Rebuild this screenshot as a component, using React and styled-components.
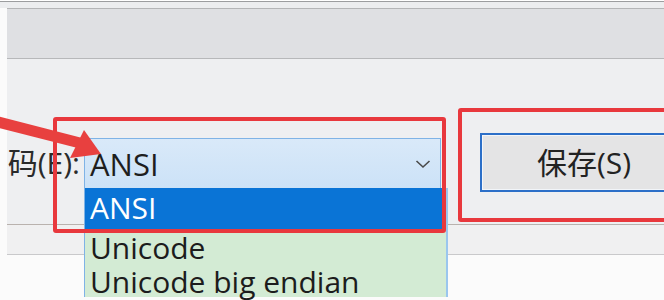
import React from 'react';
import styled, { createGlobalStyle } from 'styled-components';

const Global = createGlobalStyle`
  html, body { margin: 0; padding: 0; background: #fff; }
  body { overflow: hidden; }
`;

const Page = styled.div`
  position: relative;
  width: 664px;
  height: 300px;
  overflow: hidden;
  background: #fff;
  display: flex;
  flex-direction: column;
  font-family: "Open Sans", "Noto Sans CJK SC", sans-serif;
  color: #1e1e1e;
`;

const TopEdge = styled.div`
  flex: none;
  height: 6px;
  margin-top: 1px;
  border-top: 1px solid #9c9d9f;
  background: #ecedef;
`;

const Body = styled.div`
  flex: 1;
  display: flex;
  flex-direction: column;
  padding-left: 7px;
  background: #fbfbfb;
`;

const Band = styled.div`
  flex: none;
  height: 49px;
  background: #dfe0e3;
  border-top: 1px solid #b4b5b7;
  border-bottom: 1px solid #b7b8ba;
`;

const Main = styled.div`
  flex: none;
  height: 166px;
  box-sizing: border-box;
  background: #eeeff1;
  border-bottom: 1px solid #b9b2ae;
  padding-top: 74px;
`;

const Row = styled.div`
  display: flex;
  align-items: center;
`;

const Label = styled.div`
  flex: none;
  width: 77px;
  box-sizing: border-box;
  padding-right: 4px;
  font-size: 30px;
  line-height: 40px;
  text-align: right;
  white-space: nowrap;
  overflow: hidden;
  color: #2a2a2a;
`;

const Combo = styled.div`
  position: relative;
  flex: none;
  width: 357px;
  height: 50px;
  box-sizing: border-box;
  display: flex;
  align-items: center;
  justify-content: space-between;
  padding: 2px 9px 0 5px;
  background: linear-gradient(#d9e9f9, #cce2f7);
  border: 1px solid #7fb3e6;
  border-bottom: none;
  font-size: 31px;
  line-height: 1;
`;

const List = styled.div`
  position: absolute;
  top: 100%;
  left: -1px;
  width: 364px;
  box-sizing: border-box;
  border-left: 1px solid #7fb3e6;
  border-right: 2px solid #9ac6ee;
  background: #d3ebd4;
  z-index: 1;
`;

const Item = styled.div`
  box-sizing: border-box;
  height: ${p => (p.$selected ? '41px' : '34px')};
  display: flex;
  align-items: center;
  padding: ${p => (p.$selected ? '0' : '5px')} 0 0 5px;
  font-size: 30px;
  line-height: 1;
  white-space: nowrap;
  background: ${p => (p.$selected ? '#0a74d6' : 'transparent')};
  color: ${p => (p.$selected ? '#ffffff' : '#1c1c1c')};
`;

const SaveButton = styled.div`
  flex: none;
  margin-left: 39px;
  width: 240px;
  height: 59px;
  box-sizing: border-box;
  border: 2px solid #2c6fc8;
  background: #e4e4e5;
  box-shadow: inset 0 0 0 1px #f2f5f9;
  display: flex;
  align-items: center;
  padding-left: 55px;
  font-size: 30px;
  line-height: 1;
  color: #222;
`;

const Footer = styled.div`
  flex: none;
  height: 29px;
  background: #f0f0f1;
  border-bottom: 1px solid #c9c9cb;
`;

const Frame = styled.div`
  position: absolute;
  box-sizing: border-box;
  border: 4px solid #e8383d;
  border-radius: 3px;
  pointer-events: none;
  z-index: 2;
`;

const ArrowSvg = styled.svg`
  position: absolute;
  left: 0;
  top: 100px;
  z-index: 3;
`;

const Chevron = () => (
  <svg width="16" height="10" viewBox="0 0 16 10">
    <polyline points="1.5,2 8,8 14.5,2" fill="none" stroke="#4a4a4a" strokeWidth="1.6" />
  </svg>
);

export default function App() {
  return (
    <>
      <Global />
      <Page>
        <TopEdge />
        <Body>
          <Band />
          <Main>
            <Row>
              <Label>码(E):</Label>
              <Combo>
                <span>ANSI</span>
                <Chevron />
                <List>
                  <Item $selected>ANSI</Item>
                  <Item>Unicode</Item>
                  <Item>Unicode big endian</Item>
                </List>
              </Combo>
              <SaveButton>保存(S)</SaveButton>
            </Row>
          </Main>
          <Footer />
        </Body>
        <Frame style={{ left: 53, top: 117, width: 393, height: 116 }} />
        <Frame style={{ left: 458, top: 108, width: 230, height: 114 }} />
        <ArrowSvg width="110" height="70" viewBox="0 100 110 70">
          <line x1="-6" y1="121" x2="80" y2="143" stroke="#e8403f" strokeWidth="11" />
          <polygon points="84,130 101,154 70,158" fill="#e8403f" />
        </ArrowSvg>
      </Page>
    </>
  );
}
